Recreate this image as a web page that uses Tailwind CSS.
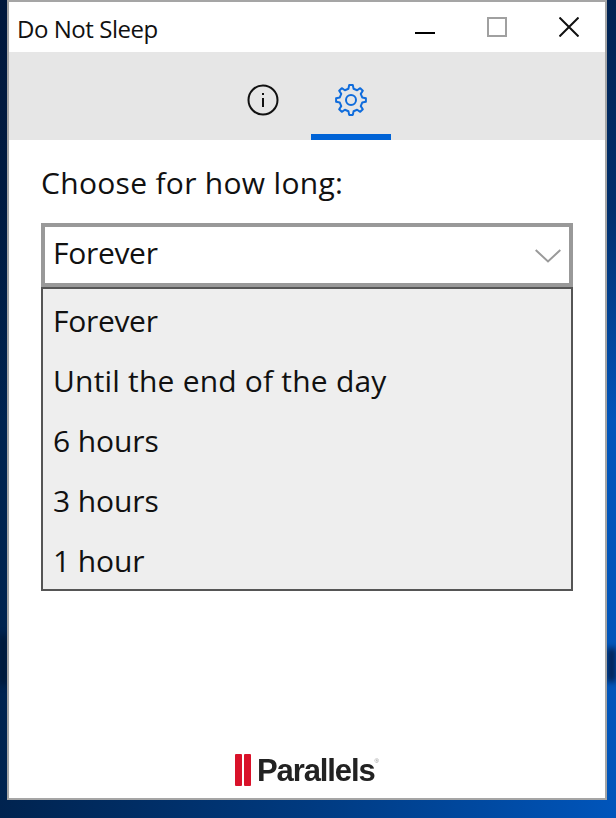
<!DOCTYPE html>
<html lang="en">
<head>
  <meta charset="UTF-8" />
  <title>Do Not Sleep</title>
  <script src="https://cdn.jsdelivr.net/npm/@tailwindcss/browser@4"></script>
</head>
<body class="relative w-[616px] h-[818px] overflow-hidden bg-gradient-to-r from-[#00234f] via-[#003a80] to-[#0055bb] font-['Open_Sans',sans-serif] text-[#111]">
  <!-- wallpaper: darker towards the top, smudges either side of the window -->
  <div class="absolute inset-x-0 top-0 h-[420px] bg-gradient-to-b from-[#001538]/80 via-[#001538]/60 to-transparent"></div>
  <div class="absolute left-0 top-[635px] w-[7px] h-[50px] bg-[#001530]/80 blur-[3px]"></div>
  <div class="absolute right-0 top-[648px] w-[9px] h-[34px] bg-[#001a45]/90 blur-[3px]"></div>

  <div class="relative ml-[7px] w-[600px] h-[800px] border-2 border-[#a5a5a5] bg-white flex flex-col">
    <!-- title bar -->
    <div class="h-[50px] shrink-0 flex items-center">
      <span class="ml-[8px] text-[24px] leading-none tracking-[-0.45px] mt-[4px]">Do Not Sleep</span>
      <div class="ml-auto flex items-start h-full pt-[15px] pr-[26px]">
        <div class="w-[20px] h-[2px] bg-black mt-[15px]"></div>
        <div class="w-[20px] h-[20px] border-2 border-[#a0a0a0] ml-[52px]"></div>
        <svg class="w-[20px] h-[20px] ml-[52px]" viewBox="0 0 20 20" fill="none" stroke="#111" stroke-width="2">
          <path d="M0.5 0.5 L19.5 19.5 M19.5 0.5 L0.5 19.5" />
        </svg>
      </div>
    </div>

    <!-- tabs -->
    <div class="h-[88px] shrink-0 bg-[#e6e6e6] flex pl-[210px]">
      <div class="w-[88px] flex items-center justify-center">
        <svg class="w-[32px] h-[32px] mt-[8px]" viewBox="0 0 32 32" fill="none" stroke="#111" stroke-width="2">
          <circle cx="16" cy="16" r="14.5" />
          <path d="M16 14 V23" />
          <path d="M16 9 V11" />
        </svg>
      </div>
      <div class="w-[80px] ml-[4px] h-full flex items-center justify-center border-b-[6px] border-[#0063d6]">
        <svg class="w-[34px] h-[34px] mt-[14px]" viewBox="0 0 34 34" fill="none" stroke="#0f6cdc" stroke-width="2">
          <polygon id="gear" stroke-linejoin="round" />
          <circle cx="17" cy="17" r="5" />
        </svg>
      </div>
    </div>

    <!-- body -->
    <div class="flex-1 flex flex-col px-[32px]">
      <p class="mt-[23px] text-[30px] leading-[40px] tracking-[0.3px]">Choose for how long:</p>
      <div class="mt-[20px] h-[64px] border-4 border-[#999] flex items-center justify-between pl-[8px] pr-[8px] text-[30px] tracking-[-0.3px]">
        <span class="-mt-[6px]">Forever</span>
        <svg class="w-[26px] h-[14px] mt-[2px]" viewBox="0 0 26 14" fill="none" stroke="#9a9a9a" stroke-width="2">
          <path d="M0.7 1 L13 12.5 L25.3 1" />
        </svg>
      </div>
      <ul class="h-[304px] border-2 border-[#555] bg-[#eeeeee] text-[30px]">
        <li class="h-[60px] mt-[1px] flex items-center pl-[10px] tracking-[-0.3px]">Forever</li>
        <li class="h-[60px] flex items-center pl-[10px] tracking-[0.2px]">Until the end of the day</li>
        <li class="h-[60px] flex items-center pl-[10px] tracking-[-0.1px]">6 hours</li>
        <li class="h-[60px] flex items-center pl-[10px] tracking-[-0.1px]">3 hours</li>
        <li class="h-[60px] flex items-center pl-[10px] tracking-[-0.1px]">1 hour</li>
      </ul>

      <!-- logo -->
      <div class="mt-auto mb-[12px] flex items-center justify-center blur-[0.5px]">
        <div class="w-[7px] h-[32px] bg-[#d9122a] rounded-[1px]"></div>
        <div class="w-[7px] h-[32px] bg-[#d9122a] rounded-[1px] ml-[2px]"></div>
        <span class="ml-[6px] font-['Liberation_Sans',sans-serif] font-bold text-[31px] leading-none tracking-[-1.1px] text-[#222]">Parallels</span>
        <span class="self-start mt-[4px] text-[6px] leading-none text-[#888] font-['Liberation_Sans',sans-serif]">®</span>
      </div>
    </div>
  </div>

  <script>
    // 8 tooth gear outline
    const pts = [];
    for (let k = 0; k < 8; k++) {
      const a = k * Math.PI / 4 - Math.PI / 2;
      [[-13, 11.5], [-7, 15], [7, 15], [13, 11.5]].forEach(function (p) {
        const t = a + p[0] * Math.PI / 180;
        pts.push((17 + p[1] * Math.cos(t)).toFixed(2) + ',' + (17 + p[1] * Math.sin(t)).toFixed(2));
      });
    }
    document.getElementById('gear').setAttribute('points', pts.join(' '));
  </script>
</body>
</html>
